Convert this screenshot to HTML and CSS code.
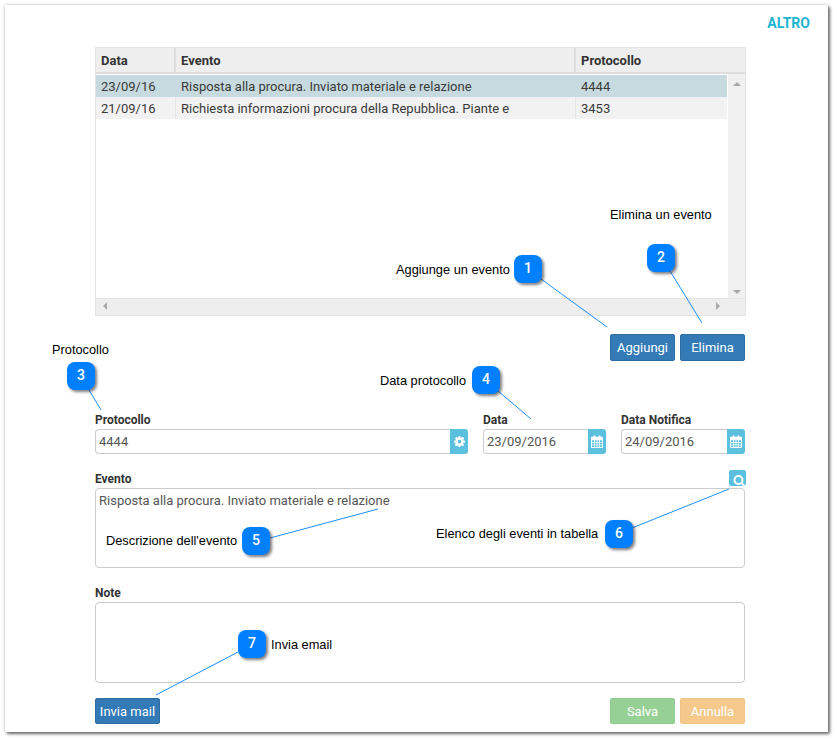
FILE: index.html
```html
<!DOCTYPE html>
<html lang="it">
<head>
<meta charset="utf-8">
<title>Altro</title>
<link rel="stylesheet" href="styles.css">
</head>
<body>
<main class="frame">
  <h1 class="title">ALTRO</h1>
  <div class="content">
    <section class="grid">
      <div class="grid-head">
        <div class="c1">Data</div><div class="c2">Evento</div><div class="c3">Protocollo</div>
      </div>
      <div class="grid-mid">
        <div class="grid-rows">
          <div class="row selected"><div class="c1">23/09/16</div><div class="c2">Risposta alla procura. Inviato materiale e relazione</div><div class="c3">4444</div></div>
          <div class="row"><div class="c1">21/09/16</div><div class="c2">Richiesta informazioni procura della Repubblica. Piante e</div><div class="c3">3453</div></div>
        </div>
        <div class="vbar"><span class="arrow up"></span><span class="arrow down"></span></div>
      </div>
      <div class="hbar"><span class="arrow left"></span><span class="arrow right"></span></div>
    </section>

    <div class="actions">
      <button class="btn primary wide">Aggiungi</button>
      <button class="btn primary wide">Elimina</button>
    </div>

    <div class="fields">
      <div class="field f-prot">
        <label>Protocollo</label>
        <div class="input-group">
          <span class="input">4444</span>
          <span class="addon"><svg viewBox="0 0 16 16" width="11" height="11"><path fill="#fff" fill-rule="evenodd" d="M6.6 0h2.8l.4 2.2 1.2.5L12.900 1.400l2 2-1.300 1.900.5 1.200L16 6.900v2.600l-2.200.4-.5 1.200 1.300 1.900-2 2-1.900-1.300-1.200.5-.4 2.200H6.600l-.4-2.200-1.200-.5-1.900 1.300-2-2 1.300-1.900-.5-1.200L0 9.500V6.900l2.200-.4.5-1.200L1.400 3.400l2-2 1.900 1.300 1.200-.5zM8 5.400a2.700 2.700 0 1 0 0 5.400 2.700 2.700 0 0 0 0-5.400z"/></svg></span>
        </div>
      </div>
      <div class="field f-date">
        <label>Data</label>
        <div class="input-group">
          <span class="input">23/09/2016</span>
          <span class="addon"><svg viewBox="0 0 14 15" width="12" height="13"><path fill="#fff" fill-rule="evenodd" d="M1 2h2V0.500h2V2h4V0.500h2V2h2a1 1 0 0 1 1 1v11a1 1 0 0 1-1 1H1a1 1 0 0 1-1-1V3a1 1 0 0 1 1-1zM1 6v2h2.500V6zm3.500 0v2h2V6zm3 0v2h2V6zm3 0v2H13V6zM1 9v2h2.500V9zm3.500 0v2h2V9zm3 0v2h2V9zm3 0v2H13V9zM1 12v2h2.500v-2zm3.500 0v2h2v-2zm3 0v2h2v-2zm3 0v2H13v-2z"/></svg></span>
        </div>
      </div>
      <div class="field f-notifica">
        <label>Data Notifica</label>
        <div class="input-group">
          <span class="input">24/09/2016</span>
          <span class="addon"><svg viewBox="0 0 14 15" width="12" height="13"><path fill="#fff" fill-rule="evenodd" d="M1 2h2V0.500h2V2h4V0.500h2V2h2a1 1 0 0 1 1 1v11a1 1 0 0 1-1 1H1a1 1 0 0 1-1-1V3a1 1 0 0 1 1-1zM1 6v2h2.500V6zm3.500 0v2h2V6zm3 0v2h2V6zm3 0v2H13V6zM1 9v2h2.500V9zm3.500 0v2h2V9zm3 0v2h2V9zm3 0v2H13V9zM1 12v2h2.500v-2zm3.500 0v2h2v-2zm3 0v2h2v-2zm3 0v2h2v-2z"/></svg></span>
        </div>
      </div>
    </div>

    <div class="field f-event">
      <label>Evento</label>
      <div class="textarea event-text">Risposta alla procura. Inviato materiale e relazione</div>
      <span class="search-btn"><svg viewBox="0 0 16 16" width="16" height="16"><circle cx="9.500" cy="10" r="4" fill="none" stroke="#fff" stroke-width="2"/><path d="M12.500 13l3 3" stroke="#fff" stroke-width="2"/></svg></span>
    </div>

    <div class="field f-note">
      <label>Note</label>
      <div class="textarea note-text"></div>
    </div>

    <div class="footer">
      <button class="btn primary wide">Invia mail</button>
      <div class="footer-right">
        <button class="btn success wide">Salva</button>
        <button class="btn warning wide">Annulla</button>
      </div>
    </div>
  </div>
</main>

<svg class="leaders" width="837" height="741" viewBox="0 0 837 741">
  <g stroke="#1e8fff" stroke-width="1" fill="none">
    <line x1="541" y1="279" x2="607" y2="327"/>
    <line x1="670" y1="271" x2="702" y2="323"/>
    <line x1="89" y1="390" x2="101" y2="410"/>
    <line x1="498" y1="391" x2="531" y2="419"/>
    <line x1="270" y1="538" x2="378" y2="509"/>
    <line x1="632" y1="528" x2="729" y2="489"/>
    <line x1="238" y1="652" x2="156" y2="695"/>
  </g>
</svg>

<span class="note n1">Aggiunge un evento</span><span class="badge b1">1</span>
<span class="note n2">Elimina un evento</span><span class="badge b2">2</span>
<span class="note n3">Protocollo</span><span class="badge b3">3</span>
<span class="note n4">Data protocollo</span><span class="badge b4">4</span>
<span class="note n5">Descrizione dell'evento</span><span class="badge b5">5</span>
<span class="note n6">Elenco degli eventi in tabella</span><span class="badge b6">6</span>
<span class="note n7">Invia email</span><span class="badge b7">7</span>
</body>
</html>
```
FILE: styles.css
```css
* { box-sizing: border-box; }
html, body { margin: 0; padding: 0; }
body {
  position: relative;
  width: 837px;
  height: 741px;
  background: #fff;
  overflow: hidden;
  font-family: Roboto, "Liberation Sans", sans-serif;
  font-size: 13px;
  color: #333;
}
.frame {
  width: 823px;
  height: 727px;
  margin: 5px 0 0 5px;
  background: #fff;
  box-shadow: 0 0 3px rgba(0,0,0,.25), 2px 2px 3px rgba(0,0,0,.55);
  padding: 11px 0 0 90px;
}
.title {
  margin: 0;
  height: 31px;
  padding-right: 18px;
  text-align: right;
  font-size: 14px;
  line-height: 15px;
  font-weight: 700;
  color: #1cb5d3;
}
.content { width: 651px; }

/* grid */
.grid {
  height: 269px;
  background: #fff;
  border: 1px solid #e4e4e4;
  display: flex;
  flex-direction: column;
}
.grid-head {
  display: flex;
  height: 26px;
  background: #eee;
  border-bottom: 2px solid #ddd;
  font-weight: 700;
  line-height: 25px;
}
.c1 { width: 80px; padding-left: 5px; flex: none; }
.c2 { width: 400px; padding-left: 5px; flex: none; }
.c3 { flex: 1; padding-left: 5px; }
.grid-head .c1, .grid-head .c2 { border-right: 2px solid #ddd; }
.grid-mid { display: flex; flex: 1; padding-top: 1px; min-height: 0; }
.grid-rows { flex: 1; margin-right: 1px; }
.row {
  display: flex;
  height: 22px;
  line-height: 23px;
  background: #f2f2f2;
  color: #3a3a3a;
}
.row .c1, .row .c2 { border-right: 1px solid #e4e4e4; }
.row.selected { background: #c6dadf; }
.row.selected .c1, .row.selected .c2 { border-right: 1px solid #c6dadf; }
.vbar {
  width: 17px;
  flex: none;
  margin-top: -1px;
  background: #f0f0f0;
  position: relative;
}
.hbar {
  height: 17px;
  flex: none;
  background: #eee;
  position: relative;
  border-top: 1px solid #e4e4e4;
}
.arrow { position: absolute; width: 0; height: 0; border: 4px solid transparent; }
.arrow.up { left: 5px; top: 4px; border-bottom-color: #aaa; }
.arrow.down { left: 5px; bottom: 0; border-top-color: #aaa; }
.arrow.left { left: 3px; top: 3px; border-right-color: #aaa; }
.arrow.right { right: 21px; top: 3px; border-left-color: #aaa; }

/* buttons */
.btn {
  display: block;
  height: 27px;
  padding: 0;
  border: 1px solid #2e6da4;
  border-radius: 2px;
  background: #337ab7;
  color: #fff;
  font: 13px Roboto, "Liberation Sans", sans-serif;
}
.wide { width: 65px; }
.success { background: #97d095; border-color: #8fcc8d; }
.warning { background: #f5c98b; border-color: #f3c585; }
.actions {
  display: flex;
  justify-content: flex-end;
  gap: 5px;
  padding-right: 1px;
  margin-top: 18px;
}

/* fields */
.fields {
  display: flex;
  gap: 15px;
  margin-top: 52px;
  padding-right: 1px;
}
.field { position: relative; }
.field label {
  display: block;
  font-size: 12px;
  font-weight: 700;
  line-height: 14px;
  color: #333;
  margin-bottom: 2px;
}
.f-prot { width: 373px; }
.f-date { width: 123px; }
.f-notifica { width: 124px; }
.input-group { display: flex; height: 25px; }
.input {
  flex: 1;
  border: 1px solid #ccc;
  border-right: 0;
  border-radius: 4px 0 0 4px;
  padding-left: 3px;
  line-height: 23px;
  color: #555;
}
.addon {
  width: 18px;
  flex: none;
  background: #5bc0de;
  border-radius: 0 3px 3px 0;
  display: flex;
  align-items: center;
  justify-content: center;
}
.textarea {
  border: 1px solid #ccc;
  border-radius: 4px;
  width: 650px;
  color: #555;
  padding: 3px;
  line-height: 17px;
}
.f-event { margin-top: 18px; }
.event-text { height: 80px; }
.f-note { margin-top: 18px; }
.note-text { height: 81px; }
.search-btn {
  position: absolute;
  top: -2px;
  right: 0;
  width: 17px;
  height: 16px;
  background: #5bc0de;
  border-radius: 2px;
  overflow: hidden;
}
.footer {
  display: flex;
  justify-content: space-between;
  margin-top: 15px;
  padding-right: 1px;
}
.footer .btn { height: 26px; }
.footer-right { display: flex; gap: 5px; }

/* callouts */
.leaders { position: absolute; left: 0; top: 0; pointer-events: none; }
.badge {
  position: absolute;
  width: 28px;
  height: 28px;
  border-radius: 8px;
  background: #007fff;
  color: #fff;
  font: 500 14px/27px Roboto, "Liberation Sans", sans-serif;
  text-align: center;
  box-shadow: 2px 2px 3px rgba(0,0,0,.5);
}
.note {
  position: absolute;
  font: 12.8px/16px "Liberation Sans", sans-serif;
  color: #000;
  white-space: nowrap;
}
.b1 { left: 514px; top: 255px; }
.b2 { left: 647px; top: 244px; }
.b3 { left: 67px; top: 362px; }
.b4 { left: 472px; top: 366px; }
.b5 { left: 242px; top: 527px; }
.b6 { left: 605px; top: 520px; }
.b7 { left: 238px; top: 630px; }
.n1 { left: 396px; top: 262px; }
.n2 { left: 610px; top: 207px; }
.n3 { left: 52px; top: 342px; }
.n4 { left: 380px; top: 373px; }
.n5 { left: 106px; top: 533px; }
.n6 { left: 436px; top: 526px; }
.n7 { left: 271px; top: 637px; }
```
